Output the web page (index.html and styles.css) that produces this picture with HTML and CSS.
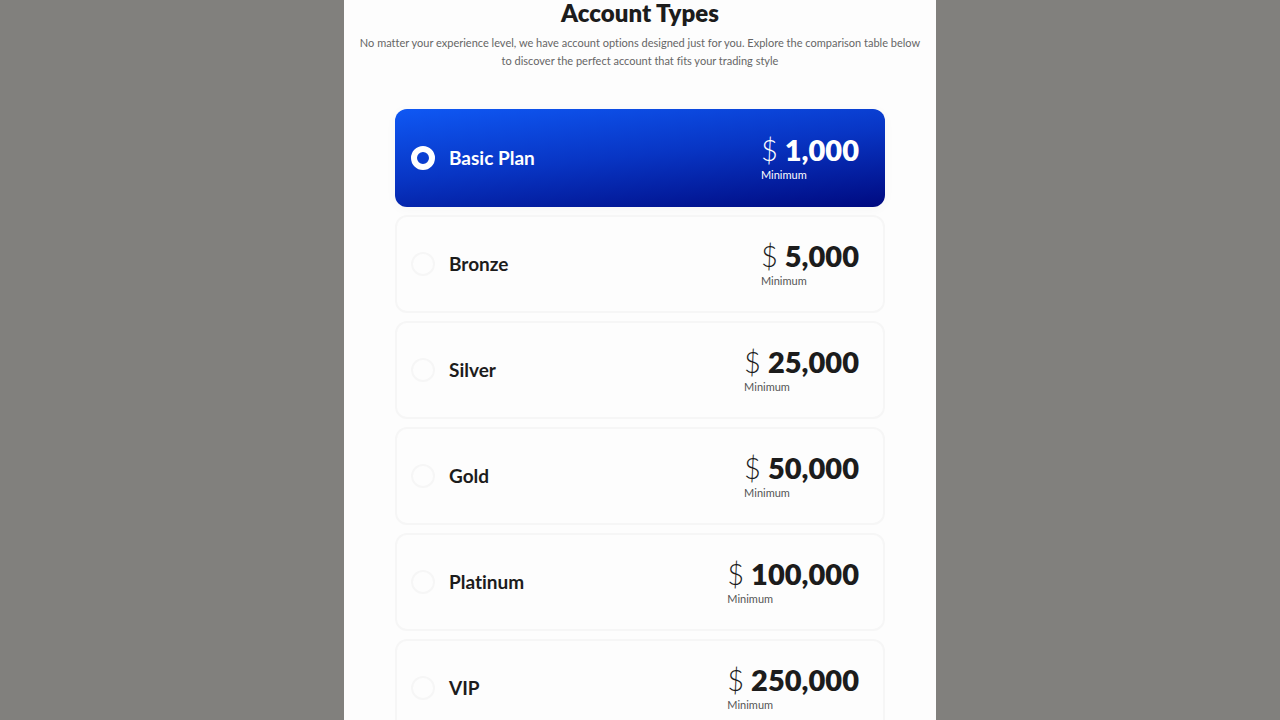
FILE: index.html
```html
<!DOCTYPE html>
<html lang="en">
<head>
    <meta charset="UTF-8">
    <meta name="viewport" content="width=device-width, initial-scale=1.0">
    <title>Account Types</title>
    <link rel="stylesheet" href="styles.css">
</head>
<body>
    <main class="panel">
        <h1 class="title">Account Types</h1>
        <p class="intro">No matter your experience level, we have account options designed just for you. Explore the comparison table below to discover the perfect account that fits your trading style</p>

        <form class="plans">
            <!-- Basic Plan -->
            <label class="plan">
                <input type="radio" name="plan" value="basic" checked>
                <span class="plan-name">Basic Plan</span>
                <span class="plan-price">
                    <span class="amount"><span class="currency">$</span>1,000</span>
                    <span class="note">Minimum</span>
                </span>
            </label>

            <!-- Bronze -->
            <label class="plan">
                <input type="radio" name="plan" value="bronze">
                <span class="plan-name">Bronze</span>
                <span class="plan-price">
                    <span class="amount"><span class="currency">$</span>5,000</span>
                    <span class="note">Minimum</span>
                </span>
            </label>

            <!-- Silver -->
            <label class="plan">
                <input type="radio" name="plan" value="silver">
                <span class="plan-name">Silver</span>
                <span class="plan-price">
                    <span class="amount"><span class="currency">$</span>25,000</span>
                    <span class="note">Minimum</span>
                </span>
            </label>

            <!-- Gold -->
            <label class="plan">
                <input type="radio" name="plan" value="gold">
                <span class="plan-name">Gold</span>
                <span class="plan-price">
                    <span class="amount"><span class="currency">$</span>50,000</span>
                    <span class="note">Minimum</span>
                </span>
            </label>

            <!-- Platinum -->
            <label class="plan">
                <input type="radio" name="plan" value="platinum">
                <span class="plan-name">Platinum</span>
                <span class="plan-price">
                    <span class="amount"><span class="currency">$</span>100,000</span>
                    <span class="note">Minimum</span>
                </span>
            </label>

            <!-- VIP -->
            <label class="plan">
                <input type="radio" name="plan" value="vip">
                <span class="plan-name">VIP</span>
                <span class="plan-price">
                    <span class="amount"><span class="currency">$</span>250,000</span>
                    <span class="note">Minimum</span>
                </span>
            </label>
        </form>
    </main>
</body>
</html>
```
FILE: styles.css
```css
* {
    box-sizing: border-box;
}
body {
    margin: 0;
    background-color: #81807d;
    color: #1c1c1c;
    font-family: Lato, "Open Sans", sans-serif;
    font-variant-ligatures: none;
}
.panel {
    max-width: 592px;
    margin: 0 auto;
    padding: 0 12px 40px;
    background-color: #fdfdfd;
}
.title {
    margin: 0;
    padding-bottom: 8px;
    font-size: 24px;
    line-height: 26px;
    font-weight: 800;
    text-align: center;
}
.intro {
    margin: 0;
    font-size: 11px;
    line-height: 18px;
    color: #666;
    text-align: center;
}
.plans {
    display: flex;
    flex-direction: column;
    gap: 8px;
    max-width: 490px;
    margin: 39px auto 0;
}
.plan {
    display: flex;
    align-items: center;
    gap: 14px;
    padding: 22px 24px 22px 14px;
    border: 2px solid #f6f6f6;
    border-radius: 12px;
    cursor: pointer;
}

/* Selected plan */
.plan:has(input:checked) {
    border-color: transparent;
    background: linear-gradient(174deg, #0f58f4 0%, #0835c4 48%, #000a80 100%) border-box;
    color: #fff;
    box-shadow: 0 2px 12px rgba(0, 0, 0, 0.03);
}

/* Round radio buttons */
.plan input {
    appearance: none;
    width: 24px;
    height: 24px;
    margin: 0;
    border: 2px solid #f6f6f6;
    border-radius: 50%;
    cursor: pointer;
}
.plan input:checked {
    border: 6px solid #fff;
}

.plan-name {
    flex: 1;
    font-size: 19px;
    line-height: 24px;
    font-weight: 700;
}
.plan-price {
    display: flex;
    flex-direction: column;
}
.amount {
    font-size: 29px;
    line-height: 34px;
    font-weight: 800;
}
.currency {
    margin-right: 7px;
    font-weight: 300;
}
.note {
    font-size: 11px;
    line-height: 16px;
    color: #555;
}
.plan:has(input:checked) .note {
    color: #fff;
}
```
